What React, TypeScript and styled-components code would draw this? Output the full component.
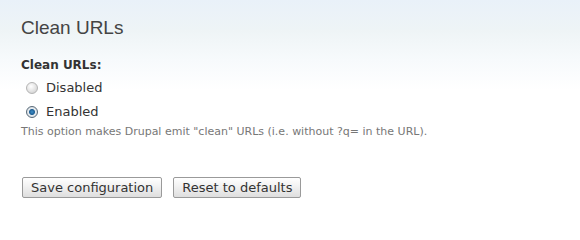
import { createGlobalStyle } from "styled-components";
import styled from "styled-components";

const GlobalStyle = createGlobalStyle`
  html {
    height: 100%;
    background-color: #ffffff;
    background-image: linear-gradient(to bottom, #e9f1f9 0px, #eef4f6 30px, #f7fafc 60px, #ffffff 90px);
    background-repeat: no-repeat;
    background-size: 100% 100px;
  }
  body {
    margin: 0;
    padding: 0;
    font-family: "DejaVu Sans", Verdana, sans-serif;
    color: #333;
  }
`;

const Page = styled.div`
  padding: 15px 0 0 21px;
`;

const Title = styled.h1`
  margin: 0;
  font-family: "Liberation Sans", Arial, sans-serif;
  font-weight: normal;
  font-size: 19px;
  line-height: 26px;
  color: #444;
`;

const Form = styled.form`
  margin-top: 16px;
`;

const FieldLabel = styled.div`
  font-weight: bold;
  font-size: 12px;
  line-height: 16px;
  color: #333;
`;

const Options = styled.div`
  display: flex;
  flex-direction: column;
  gap: 8px;
  margin-top: 7px;
`;

const Option = styled.label`
  display: flex;
  align-items: center;
  gap: 8px;
  padding-left: 5px;
  font-size: 13px;
  line-height: 16px;
  color: #333;
`;

const Radio = styled.input.attrs({ type: "radio" })`
  appearance: none;
  margin: 0;
  width: 12px;
  height: 12px;
  border-radius: 50%;
  border: 1px solid #b4b4b4;
  background: radial-gradient(circle at 40% 35%, #ffffff 0, #e2e2e2 55%, #c9c9c9 100%);
  box-sizing: border-box;

  &:checked {
    border-color: #5a6a78;
    background: radial-gradient(circle at 50% 50%, #3e8fc9 0, #1f5f94 2.5px, #e6ebef 3.5px, #c7d0d8 100%);
  }
`;

const Description = styled.div`
  margin-top: 5px;
  font-size: 11px;
  line-height: 14px;
  color: #777;
`;

const Actions = styled.div`
  display: flex;
  gap: 11px;
  margin-top: 38px;
  padding-left: 1px;
`;

const Button = styled.button`
  height: 21px;
  padding: 0 8px;
  border: 1px solid #9a9a9a;
  border-radius: 2px;
  background: linear-gradient(to bottom, #ffffff 0%, #f1f1f1 45%, #dedede 100%);
  font-family: "DejaVu Sans", Verdana, sans-serif;
  font-size: 13px;
  line-height: 19px;
  color: #333;
`;

export default function App() {
  return (
    <>
      <GlobalStyle />
      <Page>
        <Title>Clean URLs</Title>
        <Form>
          <FieldLabel>Clean URLs:</FieldLabel>
          <Options>
            <Option>
              <Radio name="clean_url" />
              Disabled
            </Option>
            <Option>
              <Radio name="clean_url" defaultChecked />
              Enabled
            </Option>
          </Options>
          <Description>
            This option makes Drupal emit "clean" URLs (i.e. without ?q= in the URL).
          </Description>
          <Actions>
            <Button type="button">Save configuration</Button>
            <Button type="button">Reset to defaults</Button>
          </Actions>
        </Form>
      </Page>
    </>
  );
}
